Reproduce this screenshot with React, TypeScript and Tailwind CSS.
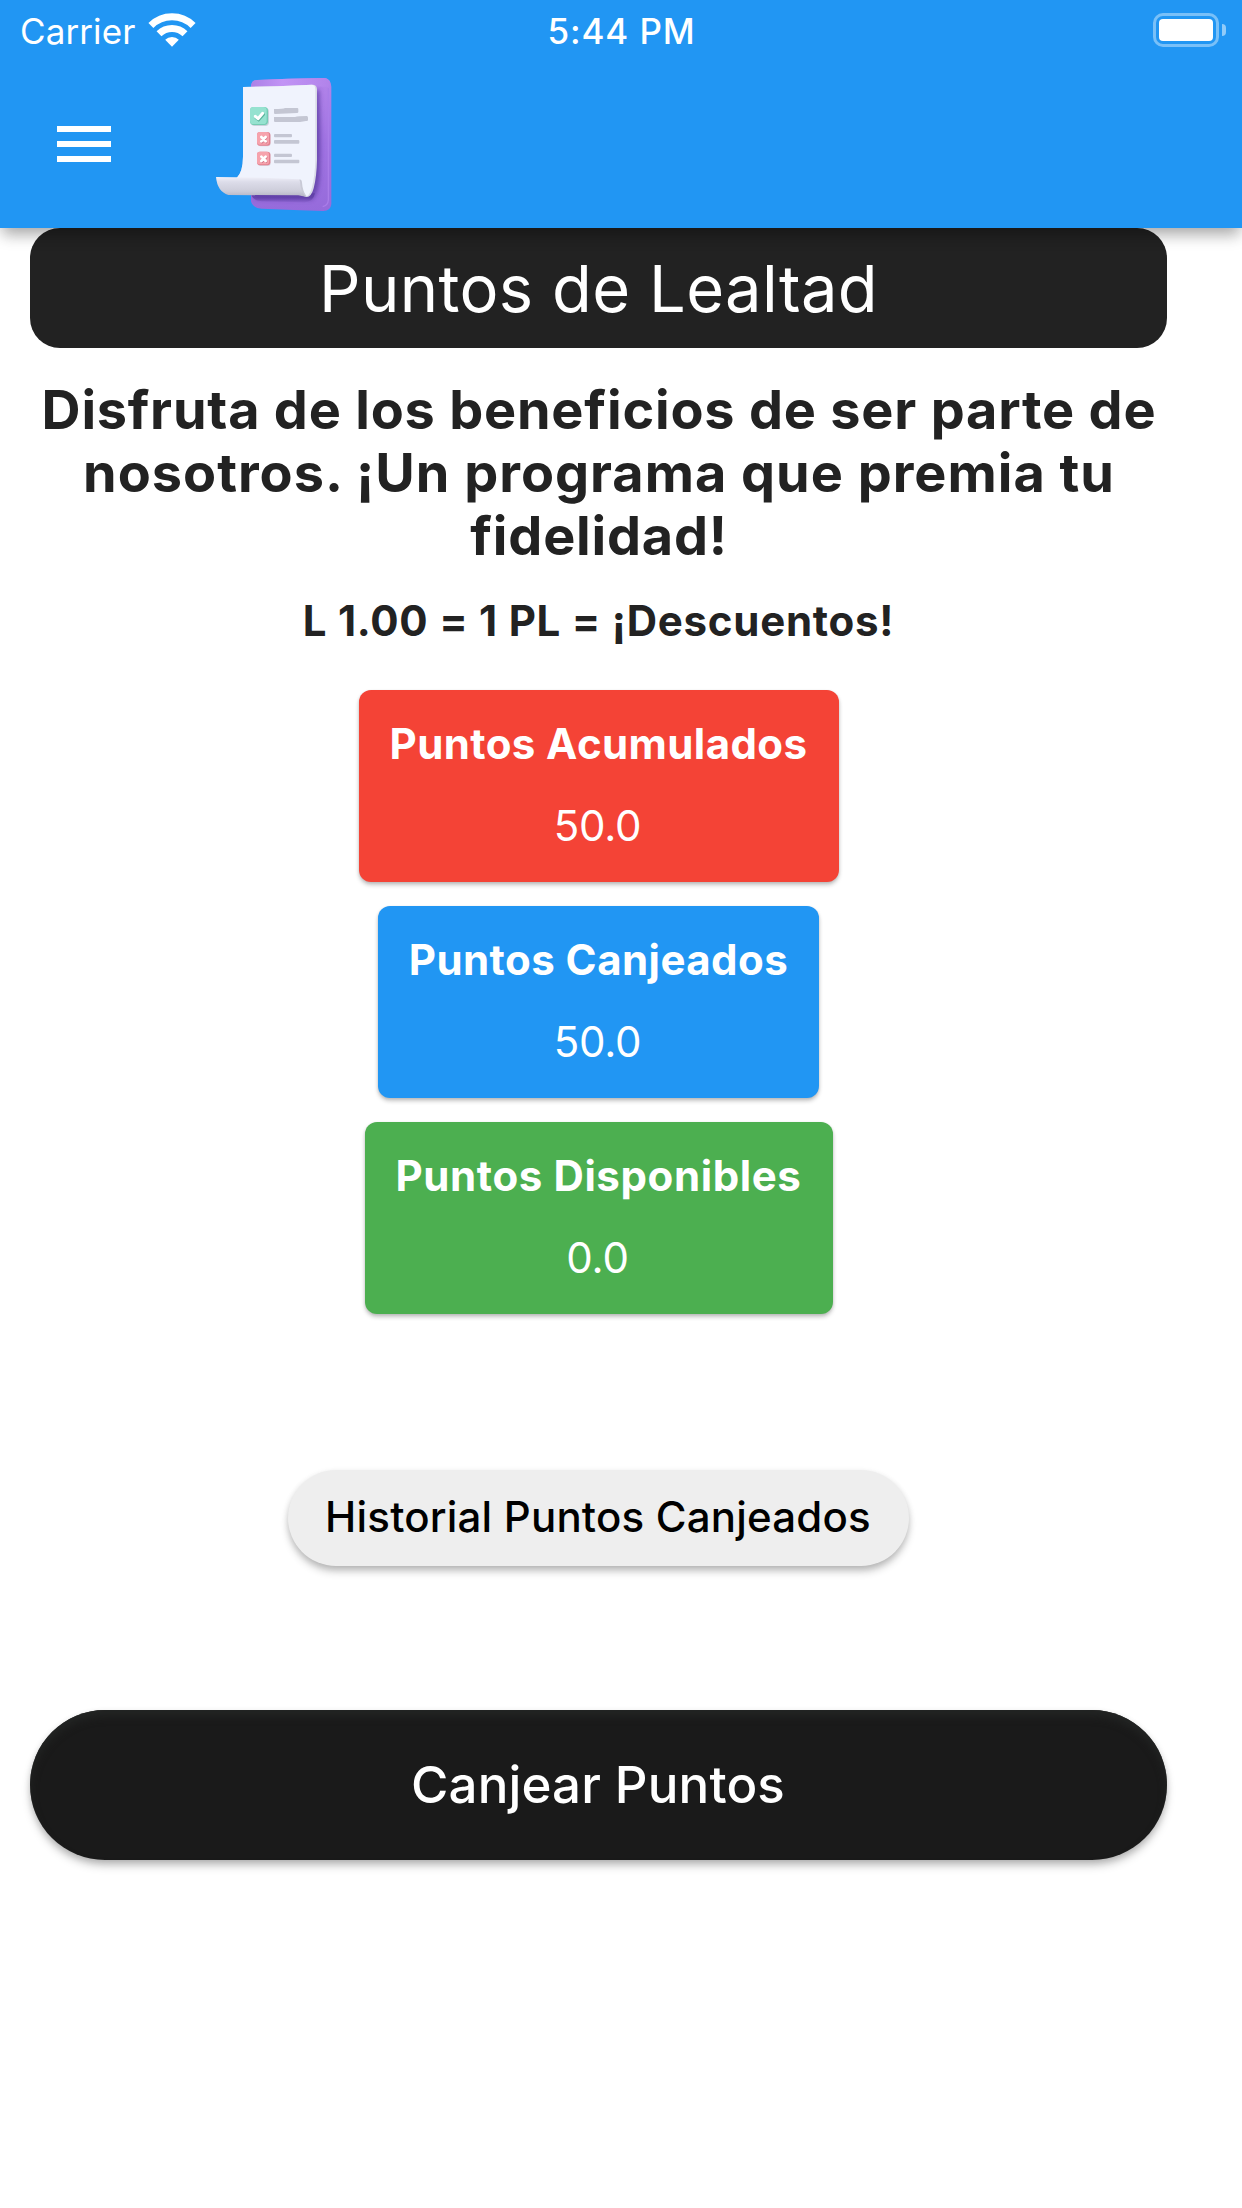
function WifiIcon() {
  return (
    <svg className="ml-[13px] h-9 w-12" viewBox="0 0 144 108" fill="none" stroke="#fff">
      <path d="M8.7 40.7 A89.5 89.5 0 0 1 135.3 40.7" strokeWidth="21" />
      <path d="M33 65 A56 56 0 0 1 111 65" strokeWidth="21" />
      <path d="M72 104 L51.5 83.5 A29 29 0 0 1 92.5 83.5 Z" fill="#fff" stroke="none" />
    </svg>
  );
}

function Battery() {
  return (
    <div className="flex items-center gap-[3px]">
      <div className="h-[34px] w-[66px] rounded-[10px] border-3 border-white/40 p-[3px]">
        <div className="h-[22px] w-[54px] rounded-[4px] bg-white" />
      </div>
      <div className="h-3 w-1 rounded-r-full bg-white/50" />
    </div>
  );
}

function Logo() {
  return (
    <svg className="ml-[84px] h-40 w-[150px]" viewBox="0 0 450 480">
      <defs>
        <linearGradient id="board" x1="0" y1="0" x2="1" y2="0">
          <stop offset="0" stopColor="#ab80e6" />
          <stop offset="0.4" stopColor="#c294f5" />
          <stop offset="1" stopColor="#b183ea" />
        </linearGradient>
        <linearGradient id="boardSide" x1="0" y1="0" x2="0" y2="1">
          <stop offset="0" stopColor="#b284ea" />
          <stop offset="0.5" stopColor="#a073e2" />
          <stop offset="1" stopColor="#966bdb" />
        </linearGradient>
        <linearGradient id="boardShade" x1="0" y1="0" x2="0" y2="1">
          <stop offset="0" stopColor="#5c3da3" />
          <stop offset="0.5" stopColor="#6241a9" />
          <stop offset="1" stopColor="#8a62cf" />
        </linearGradient>
        <linearGradient id="roll" x1="0" y1="0" x2="0" y2="1">
          <stop offset="0" stopColor="#f0f0f9" />
          <stop offset="0.25" stopColor="#dcdce9" />
          <stop offset="0.7" stopColor="#cdcdda" />
          <stop offset="1" stopColor="#b3b3c3" />
        </linearGradient>
        <filter id="soft" x="-20%" y="-20%" width="140%" height="140%">
          <feGaussianBlur stdDeviation="6" />
        </filter>
      </defs>
      <path d="M153 76 Q155 60 172 60 L265 56 L372 54 Q393 56 394 80 V432 Q392 453 370 453 L300 451 L185 446 Q158 444 153 424 Z" fill="url(#boardSide)" />
      <path d="M153 82 Q155 60 172 60 L265 56 L372 54 Q386 55 390 66 L385 80 H153 Z" fill="url(#board)" />
      <path d="M345 90 H358 Q364 230 360 340 Q358 400 335 420 L165 418 V404 H320 Z" fill="#5f3fa6" opacity="0.8" filter="url(#soft)" />
      <path d="M155 400 H345 Q340 424 315 427 L185 424 Q160 421 155 408 Z" fill="url(#boardShade)" opacity="0.85" />
      <path d="M385 84 V420 Q384 436 368 440" fill="none" stroke="#a97de8" strokeWidth="4" />
      <path d="M129 81 L232 79 L336 74 Q351 73 351 88 V300 Q350 350 341 385 Q334 411 320 411 L300 404 L110 354 Q129 335 129 290 Z" fill="#d9dae6" />
      <path d="M129 81 L232 79 L336 74 Q346 75 346 88 V300 Q345 345 336 382 Q330 404 320 410 L304 404 L110 354 Q129 335 129 290 Z" fill="#f0f3fd" />
      <path d="M48 351 L190 353 L296 358 Q304 358 304 370 Q307 396 320 411 L295 406 L85 405 Q52 395 48 351 Z" fill="url(#roll)" />
      <path d="M298 359 Q305 357 306 368 Q308 396 321 410 L316 409 Q301 394 300 364 Z" fill="#c9cad6" />
      <rect x="153" y="144" width="54" height="54" rx="11" fill="#c9d2dc" />
      <rect x="150" y="141" width="54" height="54" rx="11" fill="#74ccb4" />
      <rect x="150" y="141" width="50" height="51" rx="10" fill="#96e2d0" />
      <path d="M166 171 L174 177 L189 160" fill="none" stroke="#58b39c" strokeWidth="8" strokeLinecap="round" transform="translate(2 3)" />
      <path d="M166 169 L174 176 L188 160" fill="none" stroke="#fff" strokeWidth="9" strokeLinecap="round" strokeLinejoin="round" />
      {[216, 275].map((y) => (
        <g key={y} transform={`translate(171 ${y})`}>
          <rect x="2" y="2" width="39" height="41" rx="9" fill="#d8d3de" />
          <rect width="40" height="41" rx="9" fill="#e37f8f" />
          <rect width="36" height="38" rx="8" fill="#f6a3ad" />
          <path d="M13 15 L26 29 M26 15 L13 29" stroke="#d3788a" strokeWidth="7" strokeLinecap="round" transform="translate(2 2)" />
          <path d="M13 15 L26 28 M26 15 L13 28" stroke="#fff" strokeWidth="8" strokeLinecap="round" />
          <rect x="51" y="6" width="54" height="10" rx="3" fill="#c4c6d3" />
          <rect x="51" y="24" width="76" height="11" rx="3" fill="#c4c6d3" />
        </g>
      ))}
      <path d="M222 147 Q250 147 255 144 H292 Q295 144 295 148 V156 Q295 159 291 159 L225 162 Q222 162 222 158 Z" fill="#c4c6d3" />
      <path d="M222 171 H285 Q295 168 320 168 Q324 168 324 173 V180 Q324 184 318 183 L300 186 H225 Q222 186 222 182 Z" fill="#c4c6d3" />
    </svg>
  );
}

function Header() {
  return (
    <header className="relative z-10 h-[228px] bg-[#2196f3] text-white shadow-[0_7px_14px_-3px_rgba(0,0,0,0.24),0_10px_15px_-2px_rgba(0,0,0,0.16)]">
      <div className="grid h-[60px] grid-cols-3 items-center text-[35px] leading-[60px]">
        <div className="flex items-center pl-5">
          <span className="pt-0.5 leading-[58px] tracking-[0.1px]">Carrier</span>
          <WifiIcon />
        </div>
        <div className="pt-0.5 pl-px text-center leading-[58px] font-medium tracking-[0.9px]">5:44 PM</div>
        <div className="flex justify-end pr-4">
          <Battery />
        </div>
      </div>
      <div className="flex h-[168px] items-start pl-[57px]">
        <button className="mr-[5px] flex w-[54px] flex-col gap-[9px] pt-[66px]">
          <span className="h-1.5 w-full bg-white" />
          <span className="h-1.5 w-full bg-white" />
          <span className="h-1.5 w-full bg-white" />
        </button>
        <Logo />
      </div>
    </header>
  );
}

const CARDS = [
  { title: "Puntos Acumulados", value: "50.0", box: "w-[480px] bg-[#f44336]", spacing: "tracking-[0.4px]" },
  { title: "Puntos Canjeados", value: "50.0", box: "w-[441px] bg-[#2196f3]", spacing: "tracking-[0.45px]" },
  { title: "Puntos Disponibles", value: "0.0", box: "w-[468px] bg-[#4caf50]", spacing: "tracking-[0.6px]" },
];

function Card({ title, value, box, spacing }: (typeof CARDS)[number]) {
  return (
    <div
      className={`flex h-48 flex-col items-center gap-[34px] rounded-xl pt-[30px] text-[42px] leading-[48px] whitespace-nowrap text-white shadow-[0_3px_4px_rgba(0,0,0,0.22),0_1px_3px_rgba(0,0,0,0.1)] ${box}`}
    >
      <div className={`font-bold ${spacing}`}>{title}</div>
      <div className="pr-0.5 tracking-[-0.2px]">{value}</div>
    </div>
  );
}

export default function App() {
  return (
    <div className="h-[2208px] w-[1242px] overflow-hidden bg-white font-['Inter',sans-serif] text-[#222222]">
      <Header />
      <main className="ml-[30px] flex w-[1137px] flex-col items-center">
        <h1 className="h-[120px] w-full rounded-[30px] bg-[#222222] text-center text-[65px] leading-[122px] tracking-[0.35px] text-white">
          Puntos de Lealtad
        </h1>
        <p className="mt-[30px] pl-px text-center text-[54px] leading-[63px] font-bold tracking-[0.79px] whitespace-nowrap">
          Disfruta de los beneficios de ser parte de
          <br />
          <span className="tracking-[0.99px]">nosotros. ¡Un programa que premia tu</span>
          <br />
          <span className="tracking-[0.8px]">fidelidad!</span>
        </p>
        <p className="mt-[30px] text-[42px] leading-[48px] font-bold tracking-[0.75px]">
          L 1.00 = 1 PL = ¡Descuentos!
        </p>
        <div className="mt-[45px] flex flex-col items-center gap-6">
          {CARDS.map((c) => (
            <Card key={c.title} {...c} />
          ))}
        </div>
        <button className="mt-[156px] h-24 w-[621px] rounded-full bg-[#eeeeee] pr-px pb-0.5 text-[42px] leading-[94px] font-medium tracking-[0.2px] whitespace-nowrap text-black shadow-[0_6px_8px_-1px_rgba(0,0,0,0.24),0_2px_6px_rgba(0,0,0,0.1)]">
          Historial Puntos Canjeados
        </button>
        <button className="mt-36 h-[150px] w-full rounded-full bg-[#1a1a1a] pr-px text-[51px] font-medium tracking-[0.15px] text-white shadow-[0_6px_10px_-1px_rgba(0,0,0,0.26),0_2px_6px_rgba(0,0,0,0.1),inset_0_7px_9px_-1px_#232524]">
          Canjear Puntos
        </button>
      </main>
    </div>
  );
}
